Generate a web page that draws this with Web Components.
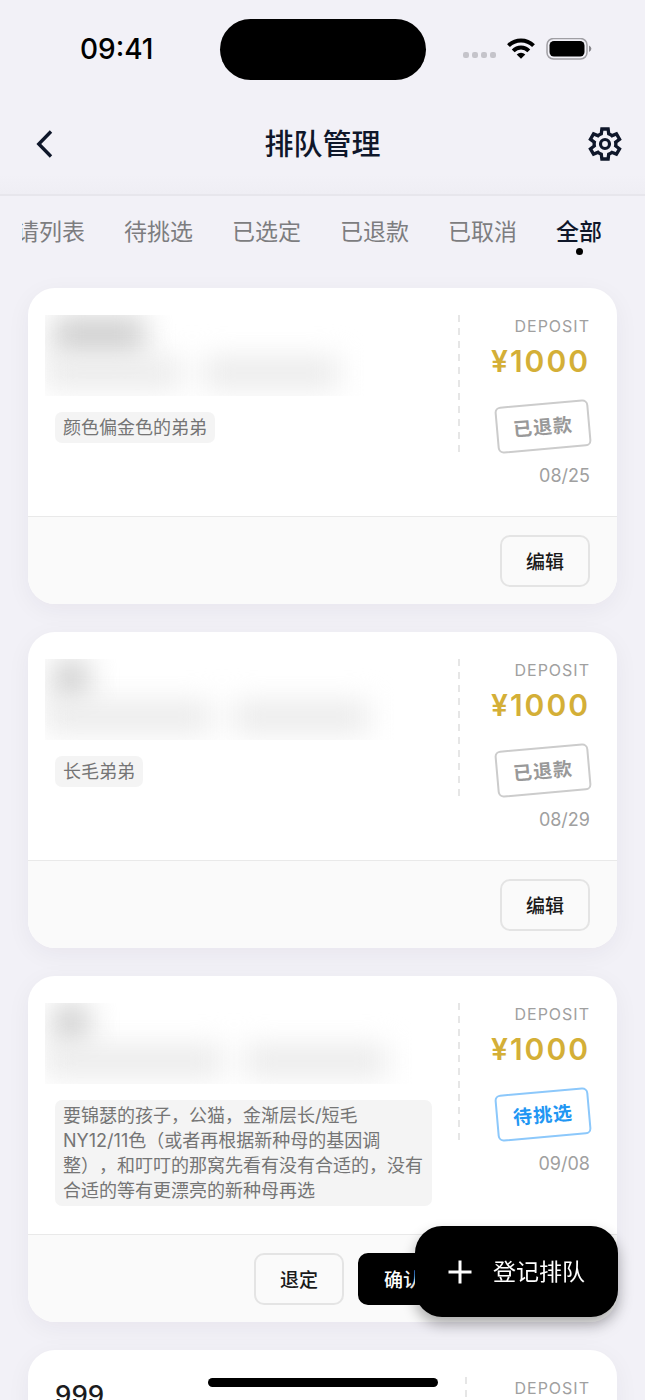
<!DOCTYPE html>
<html lang="zh-CN">
<head>
<meta charset="utf-8">
<meta name="viewport" content="width=device-width, initial-scale=1">
<title>排队管理</title>
<style>
  body {
    margin: 0;
    height: 100vh;
    overflow: hidden;
    display: flex;
    flex-direction: column;
    background: #f2f1f7;
    color: #0f172a;
    font-family: Inter, "Noto Sans CJK SC", sans-serif;
  }
</style>
</head>
<body>
  <status-bar time="09:41"></status-bar>
  <nav-header>排队管理</nav-header>
  <tab-strip>
    <tab-item>请列表</tab-item>
    <tab-item>待挑选</tab-item>
    <tab-item>已选定</tab-item>
    <tab-item>已退款</tab-item>
    <tab-item>已取消</tab-item>
    <tab-item active>全部</tab-item>
  </tab-strip>

  <queue-list>
    <queue-card price="¥1000" date="08/25">
      <masked-info slot="name" style="--name: 92px; --first: 136px; --second: 136px"></masked-info>
      <note-tag slot="note">颜色偏金色的弟弟</note-tag>
      <status-stamp slot="status">已退款</status-stamp>
      <action-button slot="actions">编辑</action-button>
    </queue-card>

    <queue-card price="¥1000" date="08/29">
      <masked-info slot="name" style="--name: 36px; --first: 166px; --second: 136px"></masked-info>
      <note-tag slot="note">长毛弟弟</note-tag>
      <status-stamp slot="status">已退款</status-stamp>
      <action-button slot="actions">编辑</action-button>
    </queue-card>

    <queue-card price="¥1000" date="09/08">
      <masked-info slot="name" style="--name: 36px; --first: 178px; --second: 142px"></masked-info>
      <note-tag slot="note">要锦瑟的孩子，公猫，金渐层长/短毛<br>NY12/11色（或者再根据新种母的基因调整），和叮叮的那窝先看有没有合适的，没有合适的等有更漂亮的新种母再选</note-tag>
      <status-stamp slot="status" kind="waiting">待挑选</status-stamp>
      <action-button slot="actions">退定</action-button>
      <action-button slot="actions" primary>确认选定</action-button>
      <action-button slot="actions">编辑</action-button>
    </queue-card>

    <queue-card>
      <person-name slot="name">999</person-name>
    </queue-card>
  </queue-list>

  <add-button>登记排队</add-button>
  <home-indicator></home-indicator>

<script>
class StatusBar extends HTMLElement {
  constructor() {
    super();
    this.attachShadow({ mode: "open" }).innerHTML = `
    <style>
      :host {
        display: grid;
        grid-template-columns: 1fr 206px 1fr;
        align-items: center;
        flex: none;
        height: 98px;
        color: #000;
      }
      .time {
        padding-left: 80px;
        font-size: 28px;
        line-height: 34px;
        font-weight: 500;
      }
      .island {
        height: 61px;
        border-radius: 31px;
        background: #000;
      }
      .icons {
        display: flex;
        justify-content: flex-end;
        align-items: center;
        padding-right: 53px;
        gap: 11px;
      }
      svg { display: block; }
    </style>
    <span class="time"></span>
    <span class="island"></span>
    <span class="icons">
      <svg width="33" height="22" viewBox="0 0 33 22" fill="#c5c4ca">
        <rect x="0" y="14" width="6" height="6" rx="2.2"/>
        <rect x="9" y="14" width="6" height="6" rx="2.2"/>
        <rect x="18" y="14" width="6" height="6" rx="2.2"/>
        <rect x="27" y="14" width="6" height="6" rx="2.2"/>
      </svg>
      <svg width="28" height="22" viewBox="0 0 28 22" fill="none" stroke="#000" stroke-width="4">
        <path d="M1.500 7.600A17.800 17.800 0 0 1 26.500 7.600"/>
        <path d="M6.200 12.800A11 11 0 0 1 21.800 12.800"/>
        <path d="M9.700 16.500A6.300 6.300 0 0 1 18.300 16.500L14 20.800Z" fill="#000" stroke="none"/>
      </svg>
      <svg width="46" height="22" viewBox="0 0 46 22">
        <rect x="1" y=".5" width="40" height="20.500" rx="6.500" fill="none" stroke="#a09fa4" stroke-width="1.500"/>
        <rect x="3.500" y="3" width="35" height="15.500" rx="4.500" fill="#000"/>
        <path d="M43 7.600Q45.400 8.800 45.400 10.800T43 14Z" fill="#88878c"/>
      </svg>
    </span>
    `;
    this.shadowRoot.querySelector(".time").textContent = this.getAttribute("time");
  }
}

class NavHeader extends HTMLElement {
  constructor() {
    super();
    this.attachShadow({ mode: "open" }).innerHTML = `
    <style>
      :host {
        display: grid;
        grid-template-columns: 60px 1fr 60px;
        align-items: center;
        flex: none;
        padding: 20px 20px 25px;
        border-bottom: 2px solid #e7e6ec;
        background: linear-gradient(#f2f1f7 80%, #efeef4);
      }
      h1 {
        margin: 0;
        padding-top: 3px;
        text-align: center;
        font-size: 29px;
        line-height: 48px;
        font-weight: 500;
      }
      button {
        display: flex;
        padding: 0;
        border: 0;
        background: none;
        color: inherit;
        cursor: pointer;
      }
      .settings { justify-content: flex-end; }
    </style>
    <button aria-label="返回">
      <svg width="48" height="40" viewBox="0 0 48 40" fill="none" stroke="currentColor" stroke-width="3.400">
        <path d="M31 7.500L18.800 20 31 32.500"/>
      </svg>
    </button>
    <h1><slot></slot></h1>
    <button class="settings" aria-label="设置">
      <svg width="40" height="40" viewBox="0 -960 960 960" fill="currentColor">
        <path d="m370-80-16-128q-13-5-24.500-12T307-235l-119 50L78-375l103-78q-1-7-1-13.500v-27q0-6.500 1-13.500L78-585l110-190 119 50q11-8 23-15t24-12l16-128h220l16 128q13 5 24.500 12t22.500 15l119-50 110 190-103 78q1 7 1 13.500v27q0 6.500-2 13.500l103 78-110 190-118-50q-11 8-23 15t-24 12L590-80H370Zm70-80h79l14-106q31-8 57.500-23.500T639-327l99 41 39-68-86-65q5-14 7-29.500t2-31.500q0-16-2-31.500t-7-29.500l86-65-39-68-99 42q-22-23-48.500-38.500T533-694l-13-106h-79l-14 106q-31 8-57.500 23.500T321-633l-99-41-39 68 86 64q-5 15-7 30t-2 32q0 16 2 31t7 30l-86 65 39 68 99-42q22 23 48.500 38.500T427-266l13 106Z"/>
        <circle cx="480" cy="-480" r="108" fill="none" stroke="currentColor" stroke-width="76"/>
      </svg>
    </button>
    `;
  }
}

class TabStrip extends HTMLElement {
  constructor() {
    super();
    this.attachShadow({ mode: "open" }).innerHTML = `
    <style>
      :host {
        display: flex;
        flex: none;
        justify-content: flex-end;
        gap: 39px;
        margin: 0 22px;
        padding: 20px 21px 33px 0;
        overflow: hidden;
      }
    </style>
    <slot></slot>
    `;
  }
}

class TabItem extends HTMLElement {
  constructor() {
    super();
    this.attachShadow({ mode: "open" }).innerHTML = `
    <style>
      :host { display: block; flex: none; }
      button {
        display: flex;
        flex-direction: column;
        align-items: center;
        padding: 0;
        border: 0;
        background: none;
        color: #7d7d80;
        font: 400 23px/32px Inter, "Noto Sans CJK SC", sans-serif;
        cursor: pointer;
      }
      button::after {
        content: "";
        width: 7px;
        height: 7px;
        border-radius: 50%;
      }
      :host([active]) button {
        color: #0f172a;
        font-weight: 500;
      }
      :host([active]) button::after { background: #000; }
    </style>
    <button><slot></slot></button>
    `;
  }
}

class QueueList extends HTMLElement {
  constructor() {
    super();
    this.attachShadow({ mode: "open" }).innerHTML = `
    <style>
      :host {
        display: flex;
        flex-direction: column;
        flex: 1;
        min-height: 0;
        gap: 28px;
        padding: 0 28px;
      }
    </style>
    <slot></slot>
    `;
  }
}

class QueueCard extends HTMLElement {
  constructor() {
    super();
    this.attachShadow({ mode: "open" }).innerHTML = `
    <style>
      :host {
        display: block;
        flex: none;
        border-radius: 27px;
        background: #fff;
        box-shadow: 0 6px 24px rgba(30, 20, 60, .05);
      }
      .body {
        display: flex;
        align-items: flex-start;
        padding: 27px 27px 28px 17px;
      }
      .info {
        display: flex;
        flex-direction: column;
        align-items: flex-start;
        flex: 1;
        min-width: 0;
        gap: 16px;
        padding-right: 26px;
      }
      .divider {
        flex: none;
        width: 2px;
        height: 137px;
        margin-right: 31px;
        background: repeating-linear-gradient(#e6e6e6 0 7px, transparent 7px 13px);
      }
      .side {
        display: flex;
        flex-direction: column;
        align-items: flex-end;
        flex: none;
        min-width: 92px;
        color: #a0a0a0;
      }
      .label {
        font-size: 16px;
        line-height: 22px;
        letter-spacing: 1px;
      }
      .price {
        margin: 6px 0 24px;
        color: #d4af37;
        font-size: 30px;
        line-height: 36px;
        font-weight: 600;
        letter-spacing: 2px;
      }
      .date {
        margin-top: 14px;
        font-size: 18px;
        line-height: 24px;
      }
      .actions {
        display: flex;
        justify-content: flex-end;
        gap: 14px;
        padding: 18px 27px 17px;
        border-top: 1px solid #e9e9e9;
        border-radius: 0 0 27px 27px;
        background: #fafafa;
      }
    </style>
    <div class="body">
      <div class="info">
        <slot name="name"></slot>
        <slot name="note"></slot>
      </div>
      <div class="divider"></div>
      <div class="side">
        <span class="label">DEPOSIT</span>
        <span class="price"></span>
        <slot name="status"></slot>
        <span class="date"></span>
      </div>
    </div>
    <div class="actions"><slot name="actions"></slot></div>
    `;
    this.shadowRoot.querySelector(".price").textContent = this.getAttribute("price");
    this.shadowRoot.querySelector(".date").textContent = this.getAttribute("date");
  }
}

// name and phone hidden behind a soft grey mask
class MaskedInfo extends HTMLElement {
  constructor() {
    super();
    this.attachShadow({ mode: "open" }).innerHTML = `
    <style>
      :host {
        display: block;
        align-self: stretch;
        box-sizing: border-box;
        height: 81px;
        overflow: hidden;
      }
      .name {
        width: var(--name);
        height: 42px;
        margin-left: 8px;
        background: #d2d2d2;
        filter: blur(14px);
      }
      .row {
        display: flex;
        gap: 22px;
        filter: blur(14px);
      }
      .row i {
        height: 32px;
        background: #ebebeb;
      }
      .row i:first-child { width: var(--first); }
      .row i:last-child { width: var(--second); }
    </style>
    <div class="name"></div>
    <div class="row"><i></i><i></i></div>
    `;
  }
}

class PersonName extends HTMLElement {
  constructor() {
    super();
    this.attachShadow({ mode: "open" }).innerHTML = `
    <style>
      :host {
        display: block;
        margin-left: 10px;
        color: #1c1c1e;
        font-size: 26px;
        line-height: 36px;
        font-weight: 500;
      }
    </style>
    <slot></slot>
    `;
  }
}

class NoteTag extends HTMLElement {
  constructor() {
    super();
    this.attachShadow({ mode: "open" }).innerHTML = `
    <style>
      :host {
        display: block;
        margin-left: 10px;
        padding: 3px 8px;
        border-radius: 7px;
        background: #f4f4f4;
        color: #757575;
        font-size: 18px;
        line-height: 25px;
        text-spacing-trim: space-all;
      }
    </style>
    <slot></slot>
    `;
  }
}

class StatusStamp extends HTMLElement {
  constructor() {
    super();
    this.attachShadow({ mode: "open" }).innerHTML = `
    <style>
      :host {
        display: block;
        padding: 9px 15px 6px;
        border: 2px solid #ccc;
        border-radius: 6px;
        color: #999;
        font-size: 19px;
        line-height: 28px;
        font-weight: 700;
        letter-spacing: 1px;
        transform: rotate(-5deg);
      }
      :host([kind="waiting"]) {
        border-color: #8cc8fb;
        color: #2196f3;
      }
    </style>
    <slot></slot>
    `;
  }
}

class ActionButton extends HTMLElement {
  constructor() {
    super();
    this.attachShadow({ mode: "open" }).innerHTML = `
    <style>
      :host { display: block; }
      button {
        display: block;
        padding: 12px 24px 9px;
        border: 2px solid #e4e4e4;
        border-radius: 10px;
        background: #fafafa;
        color: #1a1a1a;
        font: 500 19px/27px Inter, "Noto Sans CJK SC", sans-serif;
        cursor: pointer;
      }
      :host([primary]) button {
        border-color: #000;
        background: #000;
        color: #fff;
      }
    </style>
    <button><slot></slot></button>
    `;
  }
}

class AddButton extends HTMLElement {
  constructor() {
    super();
    this.attachShadow({ mode: "open" }).innerHTML = `
    <style>
      :host {
        position: fixed;
        right: 27px;
        bottom: 83px;
      }
      button {
        display: flex;
        align-items: center;
        gap: 21px;
        padding: 28px 33px;
        border: 0;
        border-radius: 27px;
        background: #000;
        color: #fff;
        font: 400 23px/33px Inter, "Noto Sans CJK SC", sans-serif;
        box-shadow: 0 7px 14px rgba(0, 0, 0, .32);
        cursor: pointer;
      }
      span { padding-top: 2px; }
    </style>
    <button>
      <svg width="24" height="24" viewBox="0 0 24 24" stroke="currentColor" stroke-width="3">
        <path d="M12 .5V23.500M.5 12H23.500"/>
      </svg>
      <span><slot></slot></span>
    </button>
    `;
  }
}

class HomeIndicator extends HTMLElement {
  constructor() {
    super();
    this.attachShadow({ mode: "open" }).innerHTML = `
    <style>
      :host {
        position: fixed;
        left: 0;
        right: 0;
        bottom: 13px;
        width: 230px;
        height: 9px;
        margin: 0 auto;
        border-radius: 5px;
        background: #000;
      }
    </style>
    `;
  }
}

customElements.define("status-bar", StatusBar);
customElements.define("nav-header", NavHeader);
customElements.define("tab-strip", TabStrip);
customElements.define("tab-item", TabItem);
customElements.define("queue-list", QueueList);
customElements.define("queue-card", QueueCard);
customElements.define("masked-info", MaskedInfo);
customElements.define("person-name", PersonName);
customElements.define("note-tag", NoteTag);
customElements.define("status-stamp", StatusStamp);
customElements.define("action-button", ActionButton);
customElements.define("add-button", AddButton);
customElements.define("home-indicator", HomeIndicator);
</script>
</body>
</html>
